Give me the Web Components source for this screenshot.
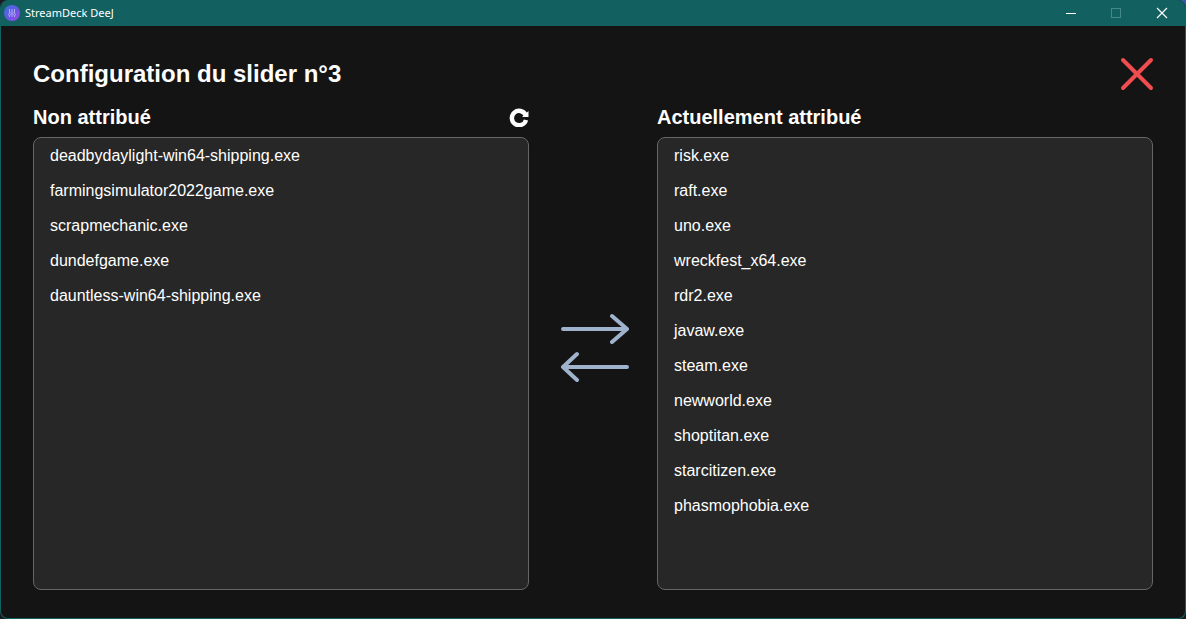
<!DOCTYPE html>
<html lang="fr">
<head>
<meta charset="utf-8">
<title>StreamDeck DeeJ</title>
<style>
html, body { height: 100%; margin: 0; }
body { background: radial-gradient(circle at 100% 0, #3f56b0 8px, #1a1a20 40px); font-family: "Liberation Sans", Arial, sans-serif; color: #fff; }
</style>
</head>
<body>
<app-window caption="StreamDeck DeeJ">
  <slider-config heading="Configuration du slider n°3">
    <app-list slot="left" heading="Non attribué" refresh
      items="deadbydaylight-win64-shipping.exe farmingsimulator2022game.exe scrapmechanic.exe dundefgame.exe dauntless-win64-shipping.exe"></app-list>
    <transfer-arrows slot="middle"></transfer-arrows>
    <app-list slot="right" heading="Actuellement attribué"
      items="risk.exe raft.exe uno.exe wreckfest_x64.exe rdr2.exe javaw.exe steam.exe newworld.exe shoptitan.exe starcitizen.exe phasmophobia.exe"></app-list>
  </slider-config>
</app-window>
<script>
const RESET = `
  *, :host { box-sizing: border-box; }
  button { display: flex; align-items: center; justify-content: center; margin: 0; padding: 0; border: 0; background: none; color: inherit; font: inherit; cursor: pointer; }
  svg { display: block; }
  h1, h2 { margin: 0; font-weight: 700; }
`;
class Base extends HTMLElement {
  connectedCallback() {
    if (!this.shadowRoot) this.attachShadow({ mode: "open" });
    this.shadowRoot.innerHTML = `<style>${RESET}</style>` + this.render();
  }
}

customElements.define("app-window", class extends Base {
  render() {
    return `<style>
      :host { display: flex; flex-direction: column; min-height: 100vh; border: 1px solid #136061; border-top: 0; border-radius: 8px; overflow: hidden; background: #141414; }
      header { display: flex; align-items: center; height: 26px; background: #136061; font: 11px/16px "Noto Sans", "Open Sans", sans-serif; }
      .logo { margin: 0 5px 0 3px; }
      .caption { flex: 1; }
      nav { display: flex; }
      nav button { width: 46px; height: 26px; }
      nav button:disabled { color: #468889; cursor: default; }
      main { flex: 1; display: flex; flex-direction: column; }
    </style>
    <header>
      <svg class="logo" width="16" height="16" viewBox="0 0 16 16" aria-hidden="true">
        <defs><linearGradient id="g" x1="0" y1="0" x2="1" y2="1"><stop offset="0" stop-color="#3b74dc"/><stop offset=".5" stop-color="#6459e2"/><stop offset="1" stop-color="#a044f0"/></linearGradient></defs>
        <circle cx="8" cy="8" r="8" fill="url(#g)"/>
        <g fill="none" stroke="#b0a9f0" stroke-width="1"><path d="M5.500 4v4M8 4v2M10.500 4v4M5.500 11v1M8 9v3M10.500 11v1"/><circle cx="5.500" cy="9.500" r="1"/><circle cx="8" cy="7.500" r="1"/><circle cx="10.500" cy="9.500" r="1"/></g>
      </svg>
      <span class="caption">${this.getAttribute("caption")}</span>
      <nav>
        <button aria-label="Réduire"><svg width="12" height="12" viewBox="0 0 12 12"><path d="M2 6.500h10" stroke="currentColor"/></svg></button>
        <button aria-label="Agrandir" disabled><svg width="12" height="12" viewBox="0 0 12 12"><rect x="1.500" y="1.500" width="9" height="9" fill="none" stroke="currentColor"/></svg></button>
        <button aria-label="Fermer"><svg width="12" height="12" viewBox="0 0 12 12"><path d="M1 1l10 10M11 1L1 11" stroke="currentColor" stroke-width="1.200"/></svg></button>
      </nav>
    </header>
    <main><slot></slot></main>`;
  }
});

customElements.define("slider-config", class extends Base {
  render() {
    return `<style>
      :host { flex: 1; display: flex; flex-direction: column; gap: 14px; padding: 32px 32px 28px; }
      header { display: flex; align-items: center; justify-content: space-between; height: 32px; }
      h1 { font-size: 24px; line-height: 32px; }
      header svg { overflow: visible; }
      .columns { flex: 1; display: grid; grid-template-columns: minmax(0, 1fr) 128px minmax(0, 1fr); }
      slot { display: grid; }
    </style>
    <header>
      <h1>${this.getAttribute("heading")}</h1>
      <button aria-label="Fermer la configuration"><svg width="32" height="32" viewBox="0 0 32 32"><path d="M2 2l28 28M30 2L2 30" stroke="#ef4d50" stroke-width="4" stroke-linecap="round"/></svg></button>
    </header>
    <div class="columns"><slot name="left"></slot><slot name="middle"></slot><slot name="right"></slot></div>`;
  }
});

customElements.define("app-list", class extends Base {
  render() {
    const items = this.getAttribute("items").split(" ");
    return `<style>
      :host { display: flex; flex-direction: column; gap: 7px; }
      header { display: flex; align-items: center; justify-content: space-between; height: 26px; }
      h2 { font-size: 20px; line-height: 26px; }
      ul { flex: 1; margin: 0; padding: 0; list-style: none; background: #272727; border: 1px solid #666; border-radius: 8px; overflow: hidden; }
      li button { width: 100%; height: 35px; padding: 0 16px; justify-content: flex-start; font-size: 16px; line-height: 24px; }
      li button:hover { background: #333; }
    </style>
    <header>
      <h2 id="title">${this.getAttribute("heading")}</h2>
      ${this.hasAttribute("refresh") ? `<button aria-label="Actualiser"><svg width="20" height="20" viewBox="0 0 20 20"><path d="M17 13A7.200 7.200 0 1 1 16.600 8" fill="none" stroke="#fff" stroke-width="4.400"/><path d="M19.500 4V10H13Z" fill="#fff"/></svg></button>` : ""}
    </header>
    <ul aria-labelledby="title">${items.map(i => `<li><button>${i}</button></li>`).join("")}</ul>`;
  }
});

customElements.define("transfer-arrows", class extends Base {
  render() {
    const arrow = d => `<svg width="72" height="32" viewBox="0 0 72 32"><path d="${d}" fill="none" stroke="#9fb3cc" stroke-width="4" stroke-linecap="round" stroke-linejoin="round"/></svg>`;
    return `<style>:host { display: flex; flex-direction: column; align-items: center; justify-content: center; gap: 6px; }</style>
    <button aria-label="Attribuer">${arrow("M6 17H70M55 4L70 17L55 30")}</button>
    <button aria-label="Retirer">${arrow("M70 17H6M20 4L6 17L20 30")}</button>`;
  }
});
</script>
</body>
</html>
